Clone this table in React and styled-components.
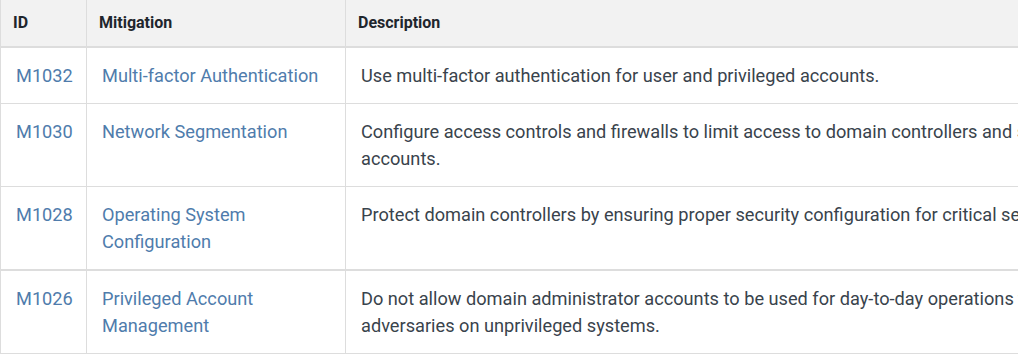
import React from 'react';
import styled, { createGlobalStyle } from 'styled-components';

const Global = createGlobalStyle`
  html, body {
    margin: 0;
    padding: 0;
    overflow: hidden;
    background: #fff;
  }
  body {
    font-family: Roboto, "Liberation Sans", sans-serif;
    color: #39434c;
  }
`;

const Table = styled.table`
  border-collapse: collapse;
  table-layout: fixed;
  width: 1345px;
  font-size: 18.2px;
`;

const HeadCell = styled.th`
  box-sizing: border-box;
  background: #f2f2f2;
  text-align: left;
  font-weight: 700;
  font-size: 16px;
  line-height: 22px;
  color: #1f262d;
  padding: 12px 12px;
  border: 1px solid #dddddd;
  border-top: none;
  border-bottom: 2px solid #dddddd;
  width: ${(p) => p.$w || 'auto'};
`;

const Row = styled.tr`
  border-bottom: ${(p) => (p.$thick ? '2px' : '1px')} solid #dddddd;
`;

const Cell = styled.td`
  box-sizing: border-box;
  vertical-align: top;
  padding: 14px 15px;
  line-height: 27px;
  border-left: 1px solid #dddddd;
  border-right: 1px solid #dddddd;
`;

const Link = styled.a`
  color: #4f7cac;
  text-decoration: none;
`;

const rows = [
  {
    id: 'M1032',
    name: 'Multi-factor Authentication',
    desc: 'Use multi-factor authentication for user and privileged accounts.',
  },
  {
    id: 'M1030',
    name: 'Network Segmentation',
    desc: 'Configure access controls and firewalls to limit access to domain controllers and systems used to create and manage accounts.',
  },
  {
    id: 'M1028',
    name: 'Operating System Configuration',
    desc: 'Protect domain controllers by ensuring proper security configuration for critical servers.',
    thick: true,
  },
  {
    id: 'M1026',
    name: 'Privileged Account Management',
    desc: 'Do not allow domain administrator accounts to be used for day-to-day operations that may expose them to potential adversaries on unprivileged systems.',
  },
];

export default function App() {
  return (
    <>
      <Global />
      <Table>
        <thead>
          <tr>
            <HeadCell $w="86px">ID</HeadCell>
            <HeadCell $w="259px">Mitigation</HeadCell>
            <HeadCell>Description</HeadCell>
          </tr>
        </thead>
        <tbody>
          {rows.map((r) => (
            <Row key={r.id} $thick={r.thick}>
              <Cell>
                <Link href="#">{r.id}</Link>
              </Cell>
              <Cell>
                <Link href="#">{r.name}</Link>
              </Cell>
              <Cell>{r.desc}</Cell>
            </Row>
          ))}
        </tbody>
      </Table>
    </>
  );
}
